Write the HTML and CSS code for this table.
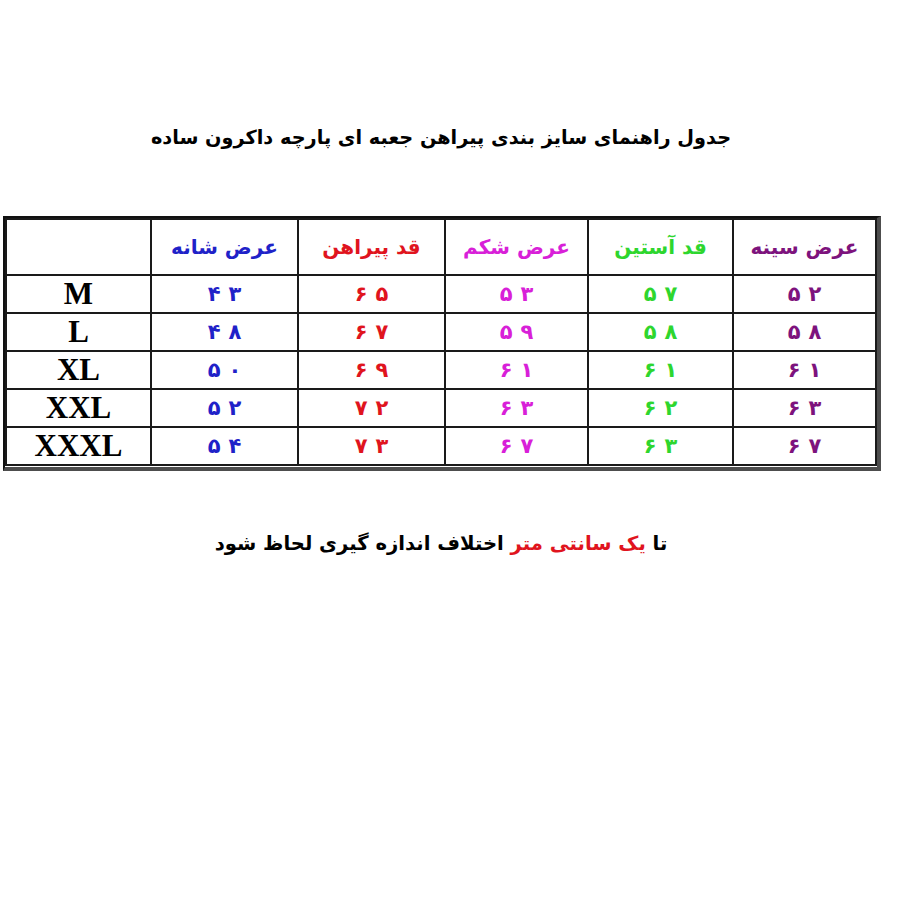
FILE: index.html
```html
<!DOCTYPE html>
<html lang="fa">
<head>
<meta charset="utf-8">
<title>جدول راهنمای سایز</title>
<link rel="stylesheet" href="styles.css">
</head>
<body>
<div class="page">
  <h1 class="title">جدول راهنمای سایز بندی پیراهن جعبه ای پارچه داکرون ساده</h1>
  <div class="table-wrap">
    <table class="size-table" dir="rtl">
      <colgroup>
        <col class="c1"><col class="c2"><col class="c3"><col class="c4"><col class="c5"><col class="c6">
      </colgroup>
      <thead>
        <tr>
          <th class="purple">عرض سینه</th>
          <th class="green">قد آستین</th>
          <th class="magenta">عرض شکم</th>
          <th class="red">قد پیراهن</th>
          <th class="blue">عرض شانه</th>
          <th class="size"></th>
        </tr>
      </thead>
      <tbody>
        <tr>
          <td class="purple"><span class="num"><span class="d">۵</span><span class="d">۲</span></span></td>
          <td class="green"><span class="num"><span class="d">۵</span><span class="d">۷</span></span></td>
          <td class="magenta"><span class="num"><span class="d">۵</span><span class="d">۳</span></span></td>
          <td class="red"><span class="num"><span class="d">۶</span><span class="d">۵</span></span></td>
          <td class="blue"><span class="num"><span class="d">۴</span><span class="d">۳</span></span></td>
          <td class="size">M</td>
        </tr>
        <tr>
          <td class="purple"><span class="num"><span class="d">۵</span><span class="d">۸</span></span></td>
          <td class="green"><span class="num"><span class="d">۵</span><span class="d">۸</span></span></td>
          <td class="magenta"><span class="num"><span class="d">۵</span><span class="d">۹</span></span></td>
          <td class="red"><span class="num"><span class="d">۶</span><span class="d">۷</span></span></td>
          <td class="blue"><span class="num"><span class="d">۴</span><span class="d">۸</span></span></td>
          <td class="size">L</td>
        </tr>
        <tr>
          <td class="purple"><span class="num"><span class="d">۶</span><span class="d">۱</span></span></td>
          <td class="green"><span class="num"><span class="d">۶</span><span class="d">۱</span></span></td>
          <td class="magenta"><span class="num"><span class="d">۶</span><span class="d">۱</span></span></td>
          <td class="red"><span class="num"><span class="d">۶</span><span class="d">۹</span></span></td>
          <td class="blue"><span class="num"><span class="d">۵</span><span class="d">۰</span></span></td>
          <td class="size">XL</td>
        </tr>
        <tr>
          <td class="purple"><span class="num"><span class="d">۶</span><span class="d">۳</span></span></td>
          <td class="green"><span class="num"><span class="d">۶</span><span class="d">۲</span></span></td>
          <td class="magenta"><span class="num"><span class="d">۶</span><span class="d">۳</span></span></td>
          <td class="red"><span class="num"><span class="d">۷</span><span class="d">۲</span></span></td>
          <td class="blue"><span class="num"><span class="d">۵</span><span class="d">۲</span></span></td>
          <td class="size">XXL</td>
        </tr>
        <tr>
          <td class="purple"><span class="num"><span class="d">۶</span><span class="d">۷</span></span></td>
          <td class="green"><span class="num"><span class="d">۶</span><span class="d">۳</span></span></td>
          <td class="magenta"><span class="num"><span class="d">۶</span><span class="d">۷</span></span></td>
          <td class="red"><span class="num"><span class="d">۷</span><span class="d">۳</span></span></td>
          <td class="blue"><span class="num"><span class="d">۵</span><span class="d">۴</span></span></td>
          <td class="size">XXXL</td>
        </tr>
      </tbody>
    </table>
  </div>
  <p class="note" dir="rtl">تا <span class="red">یک سانتی متر</span> اختلاف اندازه گیری لحاظ شود</p>
</div>
</body>
</html>
```

FILE: styles.css
```css
html, body {
  margin: 0;
  padding: 0;
  background: #ffffff;
}

.page {
  width: 882px;
  padding-top: 118px;
  font-family: "DejaVu Sans", "Noto Sans", sans-serif;
  color: #000;
}

.title {
  margin: 0;
  text-align: center;
  direction: rtl;
  font-size: 19.3px;
  font-weight: bold;
  line-height: 40px;
}

.table-wrap {
  margin: 58px 0 0 3px;
  width: 871px;
  border-top: 2px solid #111;
  border-left: 2px solid #111;
  border-right: 4px solid #4d4d4d;
  border-bottom: 4px solid #4d4d4d;
  padding: 0 1px 1px 0;
}

.size-table {
  border-collapse: collapse;
  table-layout: fixed;
  width: 870px;
}

.size-table col.c1 { width: 143px; }
.size-table col.c2 { width: 145px; }
.size-table col.c3 { width: 143px; }
.size-table col.c4 { width: 147px; }
.size-table col.c5 { width: 147px; }
.size-table col.c6 { width: 145px; }

.size-table th,
.size-table td {
  border: 2px solid #1a1a1a;
  text-align: center;
  padding: 0;
  font-weight: bold;
}

.size-table th {
  height: 54px;
  font-size: 20px;
}

.size-table td {
  height: 35.5px;
  font-size: 21px;
}

.num {
  display: inline-flex;
  direction: ltr;
  gap: 8px;
}

.size-table td.size {
  font-family: "Liberation Serif", "Times New Roman", serif;
  font-size: 31px;
  color: #000;
}

.purple { color: #7d137d; }
.green { color: #2ed62e; }
.magenta { color: #d820d8; }
.red { color: #e0141e; }
.blue { color: #1f22c8; }

.note {
  margin: 56px 0 0;
  text-align: center;
  font-size: 19.6px;
  font-weight: bold;
  line-height: 34px;
}
```
